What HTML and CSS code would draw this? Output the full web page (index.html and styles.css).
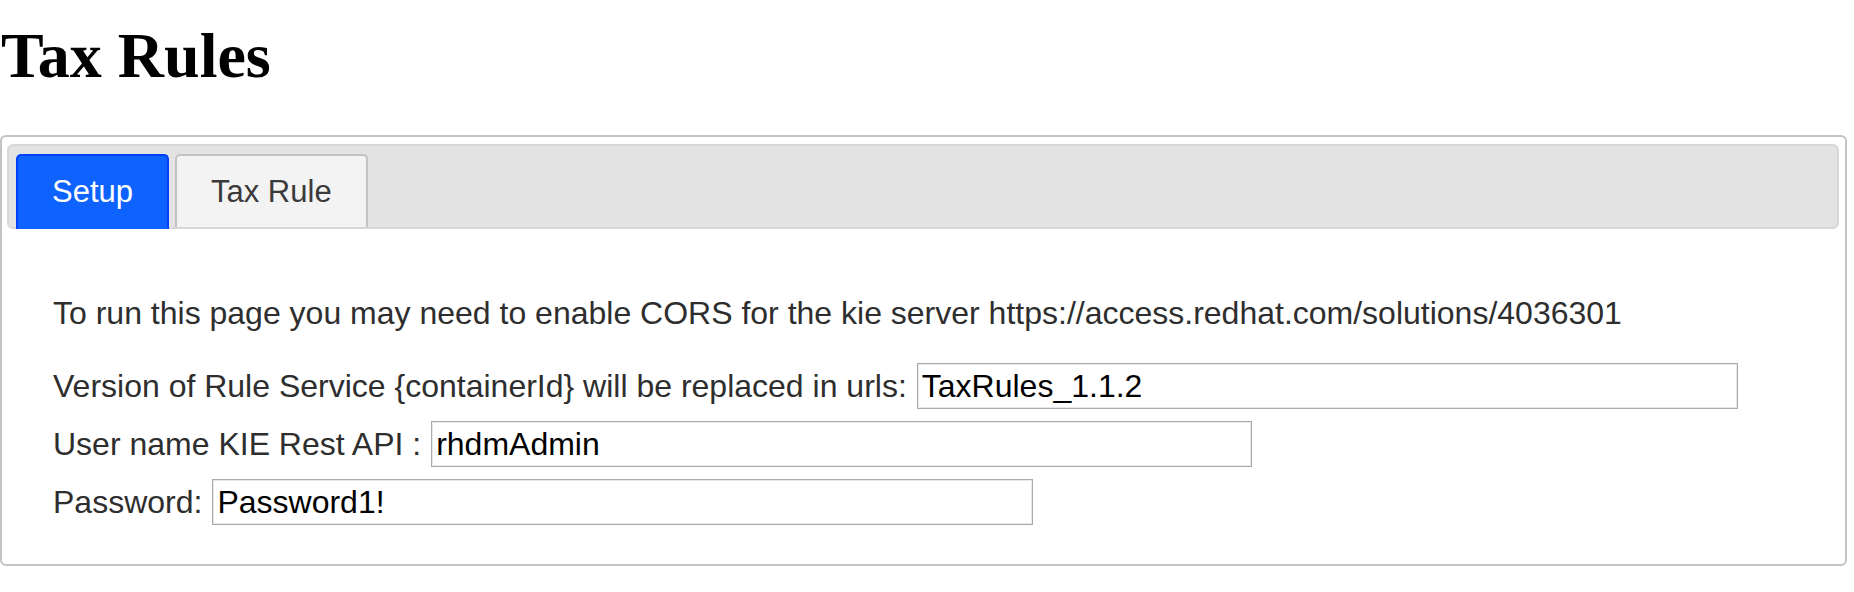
FILE: index.html
```html
<!DOCTYPE html>
<html>
<head>
<meta charset="utf-8">
<title>Tax Rules</title>
<link rel="stylesheet" href="styles.css">
</head>
<body>
<h1 class="title">Tax Rules</h1>
<div class="tabs">
  <ul class="tab-nav">
    <li class="tab tab-active"><a href="#setup">Setup</a></li>
    <li class="tab"><a href="#rule">Tax Rule</a></li>
  </ul>
  <div class="panel" id="setup">
    <p class="note">To run this page you may need to enable CORS for the kie server https://access.redhat.com/solutions/4036301</p>
    <div class="row">
      <label for="ver">Version of Rule Service {containerId} will be replaced in urls:</label>
      <input id="ver" class="field" type="text" value="TaxRules_1.1.2">
    </div>
    <div class="row">
      <label for="user">User name KIE Rest API :</label>
      <input id="user" class="field" type="text" value="rhdmAdmin">
    </div>
    <div class="row">
      <label for="pw">Password:</label>
      <input id="pw" class="field" type="text" value="Password1!">
    </div>
  </div>
</div>
</body>
</html>
```

FILE: styles.css
```css
html, body {
  margin: 0;
  padding: 0;
  background: #ffffff;
}

body {
  font-family: "Liberation Sans", Arial, sans-serif;
}

.title {
  font-family: "Liberation Serif", "Times New Roman", serif;
  font-weight: bold;
  font-size: 64px;
  line-height: 70px;
  color: #000;
  margin: 21px 0 0 1px;
  height: 70px;
}

.tabs {
  margin: 44px 7px 0 0;
  border: 2px solid #c3c3c3;
  border-radius: 6px;
  padding: 7px 6px 0 5px;
  background: #fff;
}

.tab-nav {
  list-style: none;
  margin: 0;
  padding: 8px 7px 0 7px;
  display: flex;
  gap: 6px;
  background: #e3e3e3;
  border: 2px solid #d7d7d7;
  border-radius: 6px;
}

.tab {
  margin-bottom: -2px;
  border: 2px solid #c2c2c2;
  border-bottom: 0;
  border-radius: 5px 5px 0 0;
  background: #f3f3f3;
  box-sizing: border-box;
}

.tab:not(.tab-active) {
  height: 73px;
  margin-bottom: 0;
}

.tab a {
  display: block;
  padding: 18px 34px 17px 34px;
  font-size: 31px;
  line-height: 36px;
  color: #3a3a3a;
  text-decoration: none;
}

.tab-active {
  height: 75px;
  background: #0e63ff;
  border-color: #0040ff;
}

.tab-active a {
  color: #ffffff;
}

.panel {
  padding: 66px 20px 39px 46px;
  font-size: 32px;
  line-height: 37px;
  color: #2e2e2e;
}

.note {
  margin: 0 0 31px 0;
}

.row {
  display: flex;
  align-items: baseline;
  gap: 10px;
  margin-bottom: 12px;
}

.row:last-child {
  margin-bottom: 0;
}

.field {
  width: 821px;
  height: 46px;
  box-sizing: border-box;
  border: 1px solid #a9a9a9;
  box-shadow: inset 0 0 0 1px #e8e8e8;
  padding: 4px 4px;
  margin: 0;
  font-family: "Liberation Sans", Arial, sans-serif;
  font-size: 32px;
  line-height: 37px;
  color: #000;
  background: #fff;
  outline: none;
}
```
